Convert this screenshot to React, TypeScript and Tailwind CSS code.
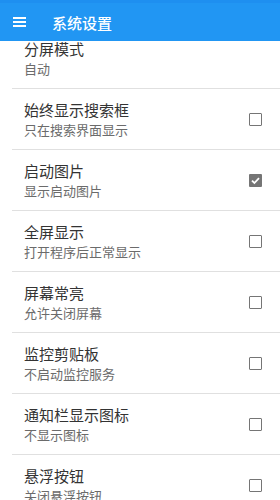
import React from "react";

type Item = { title: string; sub: string; check?: boolean; checked?: boolean };

const items: Item[] = [
  { title: "分屏模式", sub: "自动" },
  { title: "始终显示搜索框", sub: "只在搜索界面显示", check: true },
  { title: "启动图片", sub: "显示启动图片", check: true, checked: true },
  { title: "全屏显示", sub: "打开程序后正常显示", check: true },
  { title: "屏幕常亮", sub: "允许关闭屏幕", check: true },
  { title: "监控剪贴板", sub: "不启动监控服务", check: true },
  { title: "通知栏显示图标", sub: "不显示图标", check: true },
  { title: "悬浮按钮", sub: "关闭悬浮按钮", check: true },
];

function Box({ checked }: { checked?: boolean }) {
  if (checked) {
    return (
      <div className="w-[13px] h-[13px] rounded-[1px] bg-[#757575] flex items-center justify-center">
        <svg width="11" height="11" viewBox="0 0 11 11">
          <path d="M2 5.6 L4.4 8 L9 3.2" stroke="#fff" strokeWidth="1.8" fill="none" />
        </svg>
      </div>
    );
  }
  return <div className="w-[13px] h-[13px] rounded-[1px] border-[1.5px] border-[#757575]" />;
}

export default function App() {
  return (
    <div
      className="w-[280px] h-[500px] overflow-hidden bg-white flex flex-col"
      style={{ fontFamily: '"Noto Sans CJK SC", "Noto Sans", sans-serif' }}
    >
      <div className="h-[41px] shrink-0 bg-[#2196f3] flex flex-col relative z-10">
        <div className="h-[3px] bg-[#1e8ff0]" />
        <div className="flex-1 flex items-center">
          <div className="w-[13px] ml-[13px] flex flex-col gap-[2px]">
            <div className="h-[2px] bg-white" />
            <div className="h-[2px] bg-white" />
            <div className="h-[2px] bg-white" />
          </div>
          <div className="ml-[26px] text-white text-[15px] leading-none font-medium">系统设置</div>
        </div>
      </div>
      <div className="flex-1 overflow-hidden">
        <div className="mt-[-13px]">
          {items.map((it) => (
            <div key={it.title} className="ml-[12px] border-b border-[#e0e0e0]">
              <div className="h-[60px] flex items-center pl-[12px] pr-[18px]">
                <div className="flex-1 flex flex-col">
                  <div className="text-[15px] leading-[20px] text-[#333333]">{it.title}</div>
                  <div className="mt-[1px] text-[13px] leading-[18px] text-[#6b6b6b]">{it.sub}</div>
                </div>
                {it.check && <Box checked={it.checked} />}
              </div>
            </div>
          ))}
        </div>
      </div>
    </div>
  );
}
